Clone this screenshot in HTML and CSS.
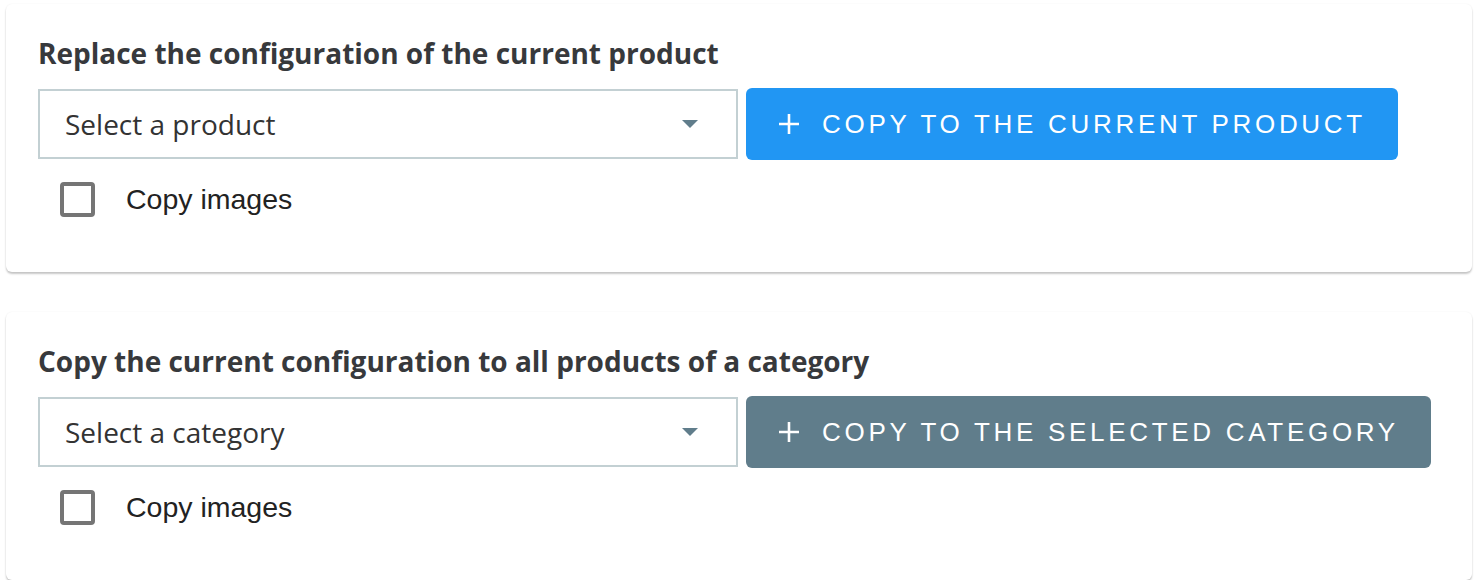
FILE: index.html
```
<!DOCTYPE html>
<html>
<head>
<meta charset="utf-8">
<link rel="stylesheet" href="styles.css">
</head>
<body>
<div class="page">
  <section class="card">
    <h2 class="title">Replace the configuration of the current product</h2>
    <div class="row">
      <div class="select"><span>Select a product</span><span class="caret"></span></div>
      <button class="btn btn-primary"><svg class="plus" viewBox="0 0 22 22"><path d="M11 1v20M1 11h20" stroke="#fff" stroke-width="2.6" fill="none"/></svg><span>COPY TO THE CURRENT PRODUCT</span></button>
    </div>
    <label class="check"><span class="box"></span><span>Copy images</span></label>
  </section>
  <section class="card">
    <h2 class="title">Copy the current configuration to all products of a category</h2>
    <div class="row">
      <div class="select"><span>Select a category</span><span class="caret"></span></div>
      <button class="btn btn-secondary"><svg class="plus" viewBox="0 0 22 22"><path d="M11 1v20M1 11h20" stroke="#fff" stroke-width="2.6" fill="none"/></svg><span>COPY TO THE SELECTED CATEGORY</span></button>
    </div>
    <label class="check"><span class="box"></span><span>Copy images</span></label>
  </section>
</div>
</body>
</html>
```
FILE: styles.css
```
html, body { margin: 0; padding: 0; background: #fff; }
.page {
  padding: 4px 6px 0 6px;
  display: flex;
  flex-direction: column;
  gap: 40px;
}
.card {
  background: #fff;
  border-radius: 6px;
  box-shadow: 0 2px 2px rgba(0,0,0,0.22), 0 0 2px rgba(0,0,0,0.06);
  padding: 30px 32px 0 32px;
  height: 238px;
  box-sizing: content-box;
}
.title {
  margin: 0;
  font-family: "Open Sans", sans-serif;
  font-weight: 700;
  font-size: 28px;
  line-height: 38px;
  color: #37393c;
}
.row {
  display: flex;
  align-items: center;
  gap: 8px;
  margin-top: 16px;
}
.select {
  width: 700px;
  height: 70px;
  box-sizing: border-box;
  border: 2px solid #c3d0d3;
  display: flex;
  align-items: center;
  justify-content: space-between;
  padding: 0 38px 0 25px;
  font-family: "Open Sans", sans-serif;
  font-size: 28px;
  color: #333;
}
.caret {
  width: 0; height: 0;
  border-left: 8px solid transparent;
  border-right: 8px solid transparent;
  border-top: 8px solid #607d8b;
}
.btn {
  height: 72px;
  border: none;
  border-radius: 6px;
  display: flex;
  align-items: center;
  gap: 22px;
  padding: 0 32px;
  font-family: "Liberation Sans", Arial, sans-serif;
  font-size: 26px;
  letter-spacing: 3.7px;
  color: #fff;
}
.btn-primary { background: #2196f3; }
.btn-secondary { background: #607d8b; }
.plus { width: 22px; height: 22px; display: block; }
.check {
  display: flex;
  align-items: center;
  gap: 31px;
  margin-top: 22px;
  padding-left: 22px;
  font-family: "Liberation Sans", Arial, sans-serif;
  font-size: 28.5px;
  color: #222;
}
.box {
  width: 35px; height: 35px;
  box-sizing: border-box;
  border: 4px solid #757575;
  border-radius: 4px;
}
```
